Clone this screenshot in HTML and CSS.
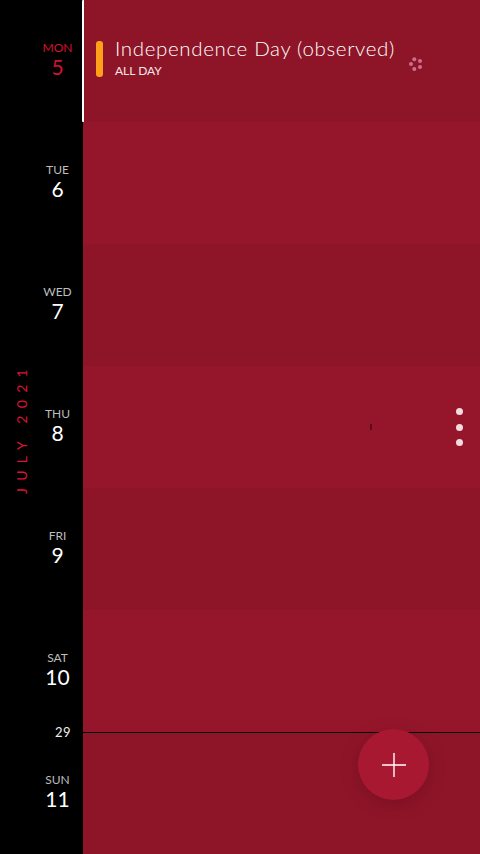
FILE: index.html
```html
<!DOCTYPE html>
<html lang="en">
<head>
    <meta charset="UTF-8">
    <meta name="viewport" content="width=device-width, initial-scale=1.0">
    <title>Calendar</title>
    <link rel="stylesheet" href="styles.css">
</head>
<body>
    <div class="week">
        <div class="day today">
            <div class="day-label">
                <div class="day-name">MON</div>
                <div class="day-num">5</div>
            </div>
            <div class="day-body dark">
                <div class="event">
                    <div class="event-bar"></div>
                    <div class="event-text">
                        <div class="event-title">Independence Day (observed)</div>
                        <div class="event-sub">ALL DAY</div>
                    </div>
                </div>
                <svg class="spinner" width="16" height="16" viewBox="0 0 16 16">
                    <circle cx="6.3" cy="3.3" r="2"/>
                    <circle cx="12" cy="5" r="2"/>
                    <circle cx="12" cy="11" r="2"/>
                    <circle cx="6.3" cy="13" r="2"/>
                    <circle cx="3" cy="8" r="2"/>
                </svg>
            </div>
        </div>
        <div class="day">
            <div class="day-label">
                <div class="day-name">TUE</div>
                <div class="day-num">6</div>
            </div>
            <div class="day-body"></div>
        </div>
        <div class="day">
            <div class="day-label">
                <div class="day-name">WED</div>
                <div class="day-num">7</div>
            </div>
            <div class="day-body dark"></div>
        </div>
        <div class="day">
            <div class="day-label">
                <div class="day-name">THU</div>
                <div class="day-num">8</div>
            </div>
            <div class="day-body"></div>
        </div>
        <div class="day">
            <div class="day-label">
                <div class="day-name">FRI</div>
                <div class="day-num">9</div>
            </div>
            <div class="day-body dark"></div>
        </div>
        <div class="day">
            <div class="day-label">
                <div class="day-name">SAT</div>
                <div class="day-num">10</div>
            </div>
            <div class="day-body"></div>
        </div>
        <div class="day">
            <div class="day-label">
                <div class="day-name">SUN</div>
                <div class="day-num">11</div>
            </div>
            <div class="day-body dark"></div>
        </div>

        <div class="month">JULY 2021</div>
        <div class="tick"></div>
        <div class="more">
            <span></span>
            <span></span>
            <span></span>
        </div>
        <div class="now">
            <div class="now-label">29</div>
            <div class="now-line"></div>
        </div>
        <button class="add">
            <svg width="26" height="26" viewBox="0 0 26 26">
                <path d="M13 1V25M1 13H25" stroke="#fff" stroke-width="1.4" fill="none"/>
            </svg>
        </button>
    </div>
</body>
</html>
```

FILE: styles.css
```css
html, body {
    margin: 0;
    height: 100%;
}
body {
    background: #000;
    font-family: Lato, "Open Sans", sans-serif;
    color: #fff;
}
.week {
    position: relative;
    display: grid;
    grid-template-rows: repeat(7, 122px);
    width: 480px;
    height: 854px;
    overflow: hidden;
}
.day {
    display: flex;
}
.day-label {
    width: 83px;
    flex-shrink: 0;
    box-sizing: border-box;
    padding: 40px 6.5px 0 0;
    display: flex;
    flex-direction: column;
    align-items: flex-end;
}
.day-name {
    width: 38px;
    text-align: center;
    font-size: 12px;
    line-height: 15px;
    color: #bdbdbd;
}
.day-num {
    width: 38px;
    margin-top: -1px;
    text-align: center;
    font-size: 21px;
    line-height: 25px;
    color: #fff;
}
.today .day-name,
.today .day-num {
    color: #d4112f;
}
.today .day-body {
    margin-left: -1px;
    border-left: 2px solid #fff;
    border-radius: 1px 0 0 1px;
}
.day-body {
    flex-grow: 1;
    display: flex;
    position: relative;
    box-sizing: border-box;
    background: #95162b;
}
.day-body.dark {
    background: #8e1528;
}
.event {
    display: flex;
    gap: 12px;
    padding: 41px 0 0 12px;
}
.event-bar {
    width: 7px;
    height: 36px;
    border-radius: 3px;
    background: #ff9f1a;
}
.event-text {
    margin-top: -5px;
}
.event-title {
    font-size: 20.5px;
    font-weight: 300;
    line-height: 25px;
    letter-spacing: 0.65px;
    color: #fff;
    white-space: nowrap;
}
.event-sub {
    margin-top: 1px;
    font-size: 12px;
    line-height: 17px;
    color: #f6e6e9;
}
.spinner {
    position: absolute;
    left: 324px;
    top: 56px;
    fill: #c9728a;
}
.month {
    position: absolute;
    left: 20.5px;
    top: 428px;
    transform: translate(-50%, -50%) rotate(-90deg);
    font-size: 14px;
    letter-spacing: 7.3px;
    color: #dc1434;
    white-space: nowrap;
}
.tick {
    position: absolute;
    left: 370px;
    top: 424px;
    width: 2px;
    height: 6px;
    background: #5c0d1a;
}
.more {
    position: absolute;
    left: 455.5px;
    top: 408px;
    display: flex;
    flex-direction: column;
    gap: 8.5px;
}
.more span {
    width: 7px;
    height: 7px;
    border-radius: 50%;
    background: #f3dbe0;
}
.now {
    position: absolute;
    left: 0;
    right: 0;
    top: 732px;
    height: 1px;
}
.now-label {
    position: absolute;
    left: 55px;
    top: -8px;
    font-size: 13px;
    line-height: 16px;
    letter-spacing: 0.4px;
    color: #eee;
}
.now-line {
    position: absolute;
    left: 83px;
    right: 0;
    top: 0;
    height: 1px;
    background: #000;
}
.add {
    position: absolute;
    left: 358px;
    top: 729px;
    width: 71px;
    height: 71px;
    padding: 0;
    border: none;
    border-radius: 50%;
    background: #a81931;
    box-shadow: 0 4px 16px rgba(90, 10, 25, 0.35);
    display: flex;
    align-items: center;
    justify-content: center;
}
```
